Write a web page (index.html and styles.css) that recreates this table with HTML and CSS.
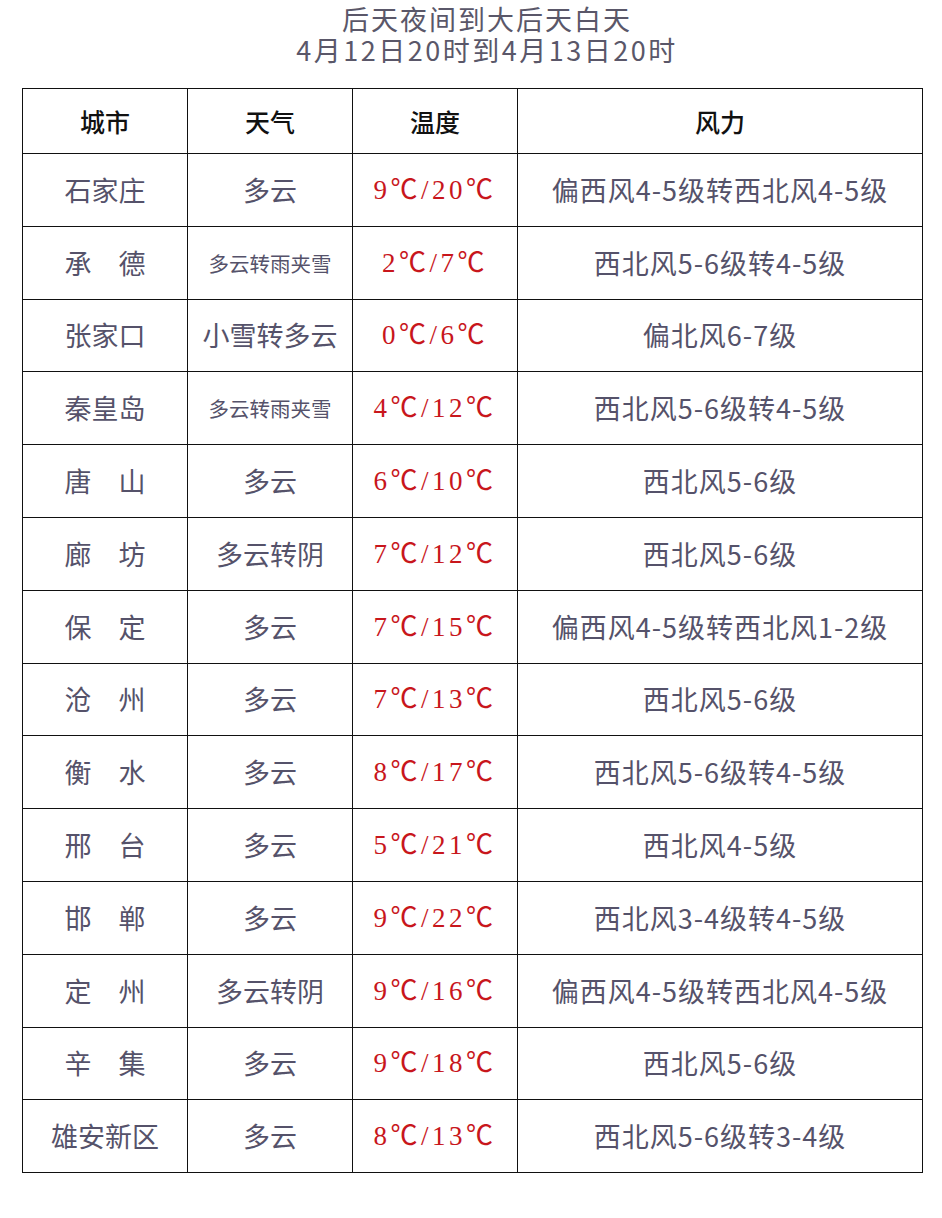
FILE: index.html
```html
<!DOCTYPE html>
<html lang="zh-CN">
<head>
<meta charset="utf-8">
<title>后天夜间到大后天白天</title>
<link rel="stylesheet" href="styles.css">
</head>
<body>
<div class="title">
  <div class="title-line">后天夜间到大后天白天</div>
  <div class="title-line sub">4月12日20时到4月13日20时</div>
</div>
<table class="wx">
  <colgroup><col class="c1"><col class="c2"><col class="c3"><col class="c4"></colgroup>
  <thead>
    <tr><th>城市</th><th>天气</th><th>温度</th><th>风力</th></tr>
  </thead>
  <tbody>
    <tr><td class="city">石家庄</td><td>多云</td><td class="temp">9℃/20℃</td><td class="wind">偏西风4-5级转西北风4-5级</td></tr>
    <tr><td class="city">承　德</td><td class="small">多云转雨夹雪</td><td class="temp">2℃/7℃</td><td class="wind">西北风5-6级转4-5级</td></tr>
    <tr><td class="city">张家口</td><td>小雪转多云</td><td class="temp">0℃/6℃</td><td class="wind">偏北风6-7级</td></tr>
    <tr><td class="city">秦皇岛</td><td class="small">多云转雨夹雪</td><td class="temp">4℃/12℃</td><td class="wind">西北风5-6级转4-5级</td></tr>
    <tr><td class="city">唐　山</td><td>多云</td><td class="temp">6℃/10℃</td><td class="wind">西北风5-6级</td></tr>
    <tr><td class="city">廊　坊</td><td>多云转阴</td><td class="temp">7℃/12℃</td><td class="wind">西北风5-6级</td></tr>
    <tr><td class="city">保　定</td><td>多云</td><td class="temp">7℃/15℃</td><td class="wind">偏西风4-5级转西北风1-2级</td></tr>
    <tr><td class="city">沧　州</td><td>多云</td><td class="temp">7℃/13℃</td><td class="wind">西北风5-6级</td></tr>
    <tr><td class="city">衡　水</td><td>多云</td><td class="temp">8℃/17℃</td><td class="wind">西北风5-6级转4-5级</td></tr>
    <tr><td class="city">邢　台</td><td>多云</td><td class="temp">5℃/21℃</td><td class="wind">西北风4-5级</td></tr>
    <tr><td class="city">邯　郸</td><td>多云</td><td class="temp">9℃/22℃</td><td class="wind">西北风3-4级转4-5级</td></tr>
    <tr><td class="city">定　州</td><td>多云转阴</td><td class="temp">9℃/16℃</td><td class="wind">偏西风4-5级转西北风4-5级</td></tr>
    <tr><td class="city">辛　集</td><td>多云</td><td class="temp">9℃/18℃</td><td class="wind">西北风5-6级</td></tr>
    <tr><td class="city">雄安新区</td><td>多云</td><td class="temp">8℃/13℃</td><td class="wind">西北风5-6级转3-4级</td></tr>
  </tbody>
</table>
</body>
</html>
```
FILE: styles.css
```css
html, body {
  margin: 0;
  padding: 0;
  background: #ffffff;
}
body {
  font-family: "Noto Sans CJK SC", "Noto Sans", sans-serif;
  color: #55526a;
}
.title {
  padding: 3px 0 0 32px;
  text-align: center;
  color: #5a5769;
}
.title-line {
  font-size: 27px;
  line-height: 31px;
  letter-spacing: 2px;
}
.title-line.sub {
  letter-spacing: 2.5px;
}
.wx {
  margin: 23px 0 0 22px;
  width: 900px;
  border-collapse: collapse;
  table-layout: fixed;
}
.c1, .c2, .c3 { width: 165px; }
.c4 { width: 405px; }
.wx th, .wx td {
  border: 1.5px solid #111;
  text-align: center;
  vertical-align: middle;
  padding: 0;
}
.wx th {
  height: 64px;
  font-size: 25px;
  font-weight: 500;
  color: #111;
}
.wx td {
  height: 71.8px;
  font-size: 27px;
  line-height: 30px;
  white-space: nowrap;
}
.wx td.small {
  font-size: 20.5px;
}
.wx td.temp {
  color: #c8161c;
  font-family: "Liberation Serif", "Noto Sans CJK SC", serif;
  font-size: 27px;
  letter-spacing: 3.5px;
}
.wx td.wind {
  letter-spacing: 1px;
}
```
